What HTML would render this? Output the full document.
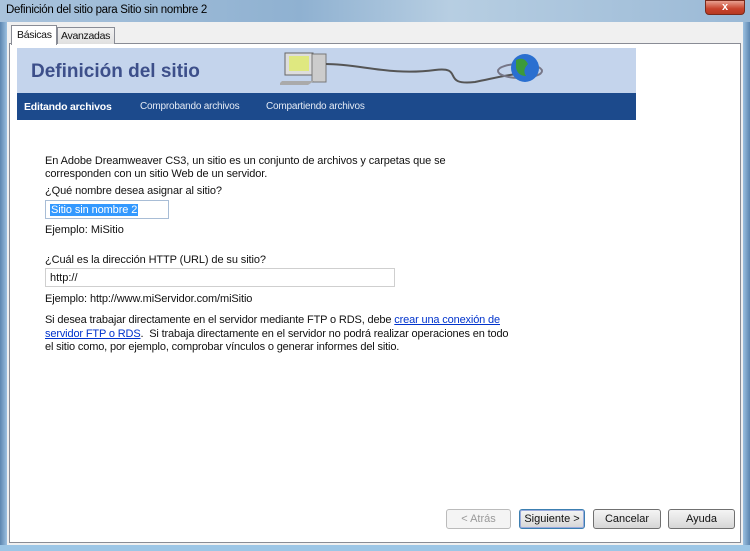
<!DOCTYPE html>
<html><head><meta charset="utf-8"><style>
*{margin:0;padding:0;box-sizing:border-box}
body{width:750px;height:551px;overflow:hidden;position:relative;font-family:"Liberation Sans",sans-serif;font-size:11px;color:#111;background:#6f93b8}
.a{position:absolute}
.t{position:absolute;white-space:nowrap}
.btn{position:absolute;height:20px;top:509px;border:1px solid #707070;border-radius:3px;background:linear-gradient(#f4f4f4,#e6e6e6 50%,#d6d6d6);text-align:center;line-height:18px;font-size:11px}
</style></head><body>
<div class="a" style="left:0;top:0;width:750px;height:22px;background:linear-gradient(90deg,#a9c3dc,#8fb1d1 40%,#b7cee2 60%,#9ab9d6)"></div>
<div class="t" style="left:6px;top:4px;font-size:11.5px;color:#000;letter-spacing:-0.3px">Definición del sitio para Sitio sin nombre 2</div>
<div class="a" style="left:705px;top:0;width:40px;height:15px;border-radius:0 0 4px 4px;background:linear-gradient(#e8a090,#c8422c 60%,#b63a22);border:1px solid #7a2a1c;color:#fff;font-weight:bold;text-align:center;font-size:11px;line-height:13px">x</div>
<div class="a" style="left:0;top:22px;width:7px;height:529px;background:linear-gradient(90deg,#5c86b0,#9cc0e0)"></div>
<div class="a" style="left:743px;top:22px;width:7px;height:529px;background:linear-gradient(90deg,#9cc0e0,#5c86b0)"></div>
<div class="a" style="left:0;top:545px;width:750px;height:6px;background:#9cc6e6"></div>
<div class="a" style="left:7px;top:22px;width:736px;height:523px;background:#f0f0f0"></div>
<div class="a" style="left:9px;top:43px;width:732px;height:500px;background:#fff;border:1px solid #898c95"></div>
<div class="a" style="left:57px;top:27px;width:58px;height:17px;border:1px solid #898c95;border-bottom:none;background:linear-gradient(#f2f2f2,#e0e0e0)"></div>
<div class="t" style="left:61px;top:30px;font-size:10.5px;letter-spacing:-0.3px">Avanzadas</div>
<div class="a" style="left:11px;top:25px;width:46px;height:20px;border:1px solid #898c95;border-bottom:none;background:#fff"></div>
<div class="t" style="left:17px;top:29px;font-size:10.5px;letter-spacing:-0.3px">Básicas</div>
<div class="a" style="left:17px;top:48px;width:619px;height:45px;background:#c4d4ec"></div>
<div class="t" style="left:31px;top:61px;font-size:19px;font-weight:bold;color:#3d4f8a">Definición del sitio</div>
<svg class="a" style="left:280px;top:48px" width="270" height="45">
<rect x="5" y="5" width="28" height="22" fill="#ddd" stroke="#666"/><rect x="9" y="8" width="20" height="15" fill="#dfe880"/>
<rect x="32" y="6" width="14" height="28" fill="#ccc" stroke="#777"/>
<polygon points="2,33 34,33 28,37 -2,37" fill="#aaa"/>
<path d="M46 16 C80 16 110 28 155 22 C185 18 160 38 195 34 C215 30 230 26 245 25" stroke="#555" stroke-width="2" fill="none"/>
<ellipse cx="240" cy="23" rx="22" ry="7" fill="none" stroke="#778" stroke-width="2"/>
<circle cx="245" cy="20" r="14" fill="#2a6fd0"/><path d="M236 12 q8 -4 12 4 q-6 6 -2 12 q-8 0 -10 -8z" fill="#3c9a3a"/>
</svg>
<div class="a" style="left:17px;top:93px;width:619px;height:27px;background:#1c4a8c"></div>
<div class="t" style="left:24px;top:101px;color:#fff;font-weight:bold;font-size:10.5px;letter-spacing:-0.2px">Editando archivos</div>
<div class="t" style="left:140px;top:101px;color:#e4ebf5;font-size:10px;letter-spacing:-0.2px">Comprobando archivos</div>
<div class="t" style="left:266px;top:101px;color:#e4ebf5;font-size:10px;letter-spacing:-0.2px">Compartiendo archivos</div>
<div class="t" style="left:45px;top:155px;line-height:13px;letter-spacing:-0.1px">En Adobe Dreamweaver CS3, un sitio es un conjunto de archivos y carpetas que se<br>corresponden con un sitio Web de un servidor.</div>
<div class="t" style="left:45px;top:185px;letter-spacing:-0.1px">¿Qué nombre desea asignar al sitio?</div>
<div class="a" style="left:45px;top:200px;width:124px;height:19px;border:1px solid #a8bdd6"></div>
<div class="t" style="left:50px;top:204px;background:#3399ff;color:#fff;padding:0 1px;letter-spacing:-0.1px">Sitio sin nombre 2</div>
<div class="t" style="left:45px;top:224px">Ejemplo: MiSitio</div>
<div class="t" style="left:45px;top:254px;letter-spacing:-0.1px">¿Cuál es la dirección HTTP (URL) de su sitio?</div>
<div class="a" style="left:45px;top:268px;width:350px;height:19px;border:1px solid #cfcfcf"></div>
<div class="t" style="left:50px;top:272px">http://</div>
<div class="t" style="left:45px;top:293px;letter-spacing:-0.1px">Ejemplo: http://www.miServidor.com/miSitio</div>
<div class="t" style="left:45px;top:314px;line-height:13.5px;letter-spacing:-0.15px">Si desea trabajar directamente en el servidor mediante FTP o RDS, debe <span style="color:#0033cc;text-decoration:underline">crear una conexión de</span><br><span style="color:#0033cc;text-decoration:underline">servidor FTP o RDS</span>.&nbsp; Si trabaja directamente en el servidor no podrá realizar operaciones en todo<br>el sitio como, por ejemplo, comprobar vínculos o generar informes del sitio.</div>
<div class="btn" style="left:446px;width:65px;color:#999;border-color:#bbb;background:#f4f4f4">&lt; Atrás</div>
<div class="btn" style="left:519px;width:66px;border-color:#3c7fb1;box-shadow:inset 0 0 0 1px #9ad">Siguiente &gt;</div>
<div class="btn" style="left:593px;width:68px">Cancelar</div>
<div class="btn" style="left:668px;width:67px">Ayuda</div>
</body></html>
